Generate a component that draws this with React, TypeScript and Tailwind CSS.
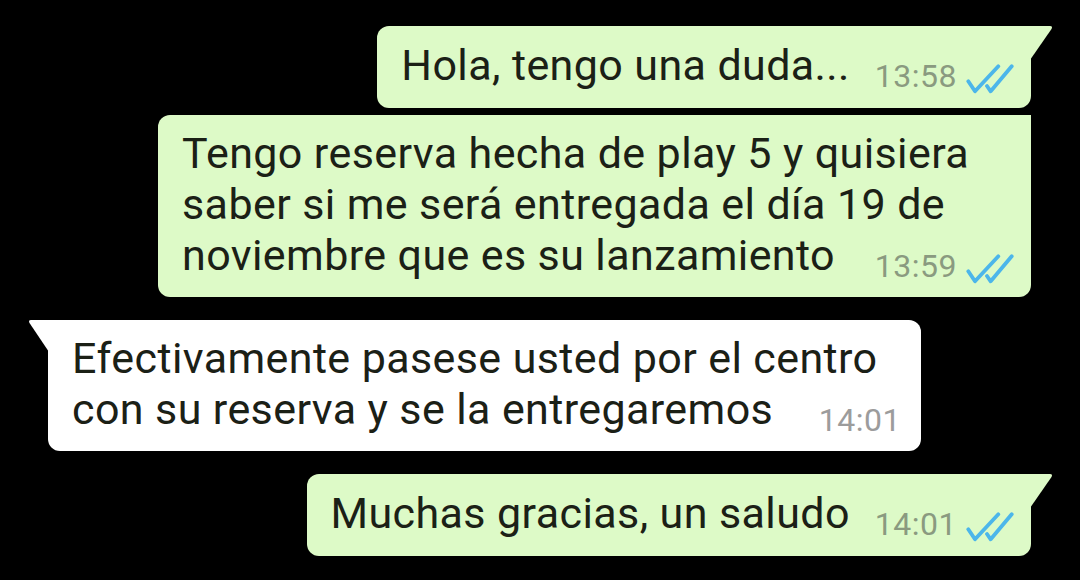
import React from 'react';

const Ticks: React.FC = () => (
	<svg width="48" height="30" viewBox="0 0 48 30" fill="none" className="block relative top-[2px]">
		<path d="M2.3 17.3 L9 27.3 L32.3 2.3" stroke="#4cb6ea" strokeWidth="3.8" strokeLinecap="round" strokeLinejoin="round" />
		<path d="M21 22 L24.7 27.3 L45.7 2.3" stroke="#4cb6ea" strokeWidth="3.8" strokeLinecap="round" strokeLinejoin="round" />
	</svg>
);

type Msg = {
	lines: string[];
	time: string;
	out: boolean;
	tail: boolean;
};

const messages: Msg[] = [
	{ lines: ['Hola, tengo una duda...'], time: '13:58', out: true, tail: true },
	{
		lines: ['Tengo reserva hecha de play 5 y quisiera', 'saber si me será entregada el día 19 de', 'noviembre que es su lanzamiento'],
		time: '13:59',
		out: true,
		tail: false,
	},
	{
		lines: ['Efectivamente pasese usted por el centro', 'con su reserva y se la entregaremos'],
		time: '14:01',
		out: false,
		tail: true,
	},
	{ lines: ['Muchas gracias, un saludo'], time: '14:01', out: true, tail: true },
];

const Meta: React.FC<{ m: Msg }> = ({ m }) => (
	<span
		className={`shrink-0 inline-flex items-end gap-[9px] relative top-[7px] text-[32px] leading-none tracking-[0.5px] ${
			m.out ? 'text-[#8a9a80]' : 'text-[#9c9c9c]'
		}`}
	>
		{m.time}
		{m.out && <Ticks />}
	</span>
);

const Bubble: React.FC<{ m: Msg }> = ({ m }) => {
	const bg = m.out ? 'bg-[#ddfac7]' : 'bg-white';
	const multi = m.lines.length > 1;
	const last = m.lines[m.lines.length - 1];
	return (
		<div
			className={`relative ${multi ? 'w-[873px] pt-[13px] pb-[16px]' : 'w-fit pt-[14px] pb-[17px]'} ${bg} rounded-[12px] ${
				m.out ? 'rounded-tr-none' : 'rounded-tl-none'
			} pl-[24px] ${m.out ? 'pr-[17px]' : 'pr-[20px]'}`}
		>
			{m.tail && m.out && (
				<svg width="23" height="34" viewBox="0 0 23 34" className="absolute -right-[22px] top-0">
					<path d="M0 0 H20 Q23 0 21.5 3 L0 34 Z" fill="#ddfac7" />
				</svg>
			)}
			{m.tail && !m.out && (
				<svg width="21" height="32" viewBox="0 0 21 32" className="absolute -left-[20px] top-0">
					<path d="M21 0 H3 Q0 0 1.5 3 L21 32 Z" fill="#ffffff" />
				</svg>
			)}
			<div className="text-[43px] leading-[51px] tracking-[0.4px] text-[#1b2016]">
				{m.lines.slice(0, -1).map((l, i) => (
					<div key={i} className="whitespace-nowrap">
						{l}
					</div>
				))}
				<div className="flex items-baseline justify-between">
					<span className="whitespace-nowrap">{last}</span>
					<span className="ml-[25px] inline-flex">
						<Meta m={m} />
					</span>
				</div>
			</div>
		</div>
	);
};

export default function App() {
	return (
		<div className="w-[1080px] h-[580px] bg-black overflow-hidden pt-[26px] font-['Roboto',sans-serif]">
			<div className="flex flex-col">
				<div className="self-end mr-[49px]">
					<Bubble m={messages[0]} />
				</div>
				<div className="self-end mr-[49px] mt-[7px]">
					<Bubble m={messages[1]} />
				</div>
				<div className="self-start ml-[48px] mt-[23px]">
					<Bubble m={messages[2]} />
				</div>
				<div className="self-end mr-[49px] mt-[23px]">
					<Bubble m={messages[3]} />
				</div>
			</div>
		</div>
	);
}
